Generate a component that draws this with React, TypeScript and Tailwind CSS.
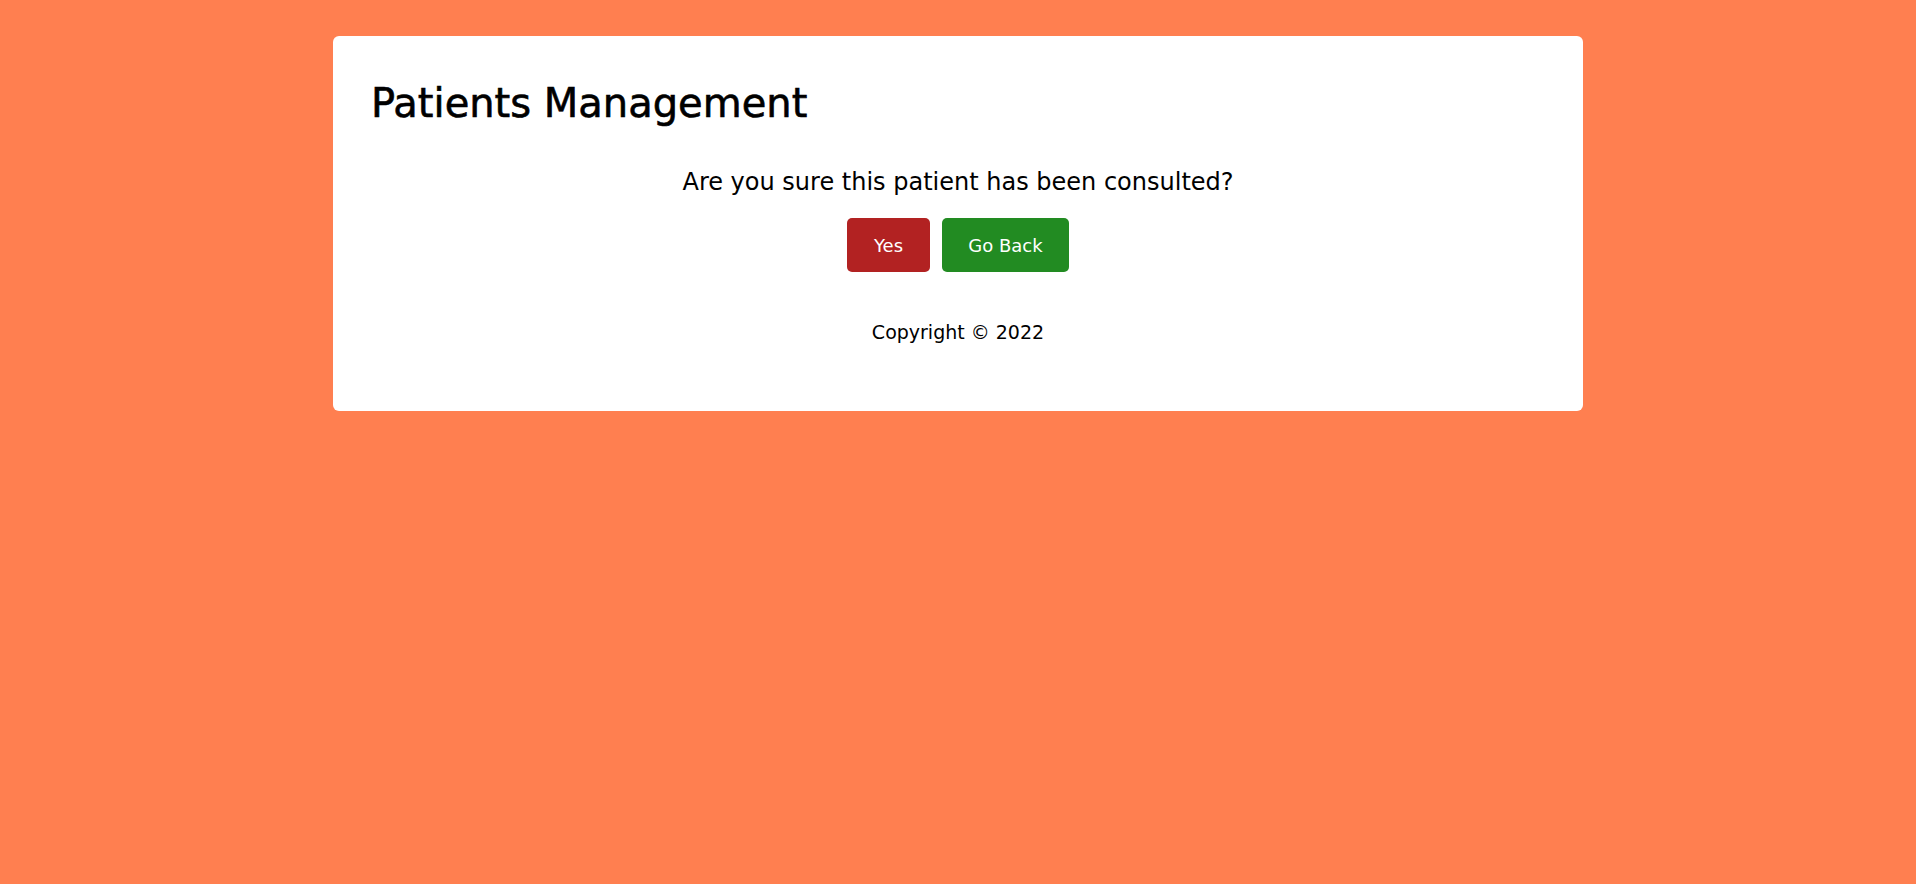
export default function App() {
  return (
    <div className="min-h-screen bg-[#ff7f50] pt-[36px] font-['DejaVu_Sans',sans-serif] text-black">
      <div className="mx-auto w-[1250px] rounded-md bg-white px-[38px] pt-[43px] pb-[64px]">
        <h1 className="text-[40px] leading-[48px] font-normal [-webkit-text-stroke:0.6px_black]">Patients Management</h1>

        <div className="mt-[37px] flex flex-col items-center">
          <p className="text-[24px] leading-[36px]">Are you sure this patient has been consulted?</p>

          <div className="mt-[18px] flex gap-[12px]">
            <button className="flex h-[54px] w-[83px] items-center justify-center rounded-[5px] bg-[#b22222] text-[18px] text-white">
              Yes
            </button>
            <button className="flex h-[54px] w-[127px] items-center justify-center rounded-[5px] bg-[#228b22] text-[18px] text-white">
              Go Back
            </button>
          </div>

          <p className="mt-[46px] text-[19px] leading-[28.5px]">Copyright © 2022</p>
        </div>
      </div>
    </div>
  );
}
